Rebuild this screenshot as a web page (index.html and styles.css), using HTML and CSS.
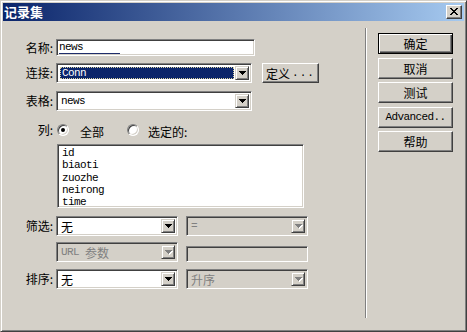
FILE: index.html
```html
<!DOCTYPE html>
<html lang="zh">
<head>
<meta charset="utf-8">
<title>记录集</title>
<link rel="stylesheet" href="styles.css">
</head>
<body>
<div class="window">
  <div class="titlebar">
    <span class="title">记录集</span>
    <span class="close-btn">
      <svg width="8" height="7" viewBox="0 0 8 7"><path d="M0 0h2v1H0zM6 0h2v1H6zM1 1h2v1H1zM5 1h2v1H5zM2 2h4v1H2zM3 3h2v1H3zM2 4h4v1H2zM1 5h2v1H1zM5 5h2v1H5zM0 6h2v1H0zM6 6h2v1H6z"/></svg>
    </span>
  </div>

  <div class="client">
    <div class="form">
      <div class="row row-name">
        <span class="lbl">名称:</span>
        <div class="field name-field"><span class="mono typed">news</span></div>
      </div>

      <div class="row row-conn">
        <span class="lbl">连接:</span>
        <div class="combo conn">
          <span class="value"><span class="sel mono">Conn</span></span>
          <span class="drop"><svg width="7" height="4" viewBox="0 0 7 4"><path d="M0 0h7v1H0zM1 1h5v1H1zM2 2h3v1H2zM3 3h1v1H3z"/></svg></span>
        </div>
        <button class="btn define">定义<span class="mono">...</span></button>
      </div>

      <div class="row row-table">
        <span class="lbl">表格:</span>
        <div class="combo wide">
          <span class="value mono">news</span>
          <span class="drop"><svg width="7" height="4" viewBox="0 0 7 4"><path d="M0 0h7v1H0zM1 1h5v1H1zM2 2h3v1H2zM3 3h1v1H3z"/></svg></span>
        </div>
      </div>

      <div class="row row-cols">
        <span class="lbl">列:</span>
        <span class="radio checked"></span>
        <span class="opt opt-all">全部</span>
        <span class="radio second"></span>
        <span class="opt opt-sel">选定的:</span>
      </div>

      <div class="listbox mono">
        <div class="item">id</div>
        <div class="item">biaoti</div>
        <div class="item">zuozhe</div>
        <div class="item">neirong</div>
        <div class="item">time</div>
      </div>

      <div class="row row-filter">
        <span class="lbl">筛选:</span>
        <div class="combo half">
          <span class="value">无</span>
          <span class="drop"><svg width="7" height="4" viewBox="0 0 7 4"><path d="M0 0h7v1H0zM1 1h5v1H1zM2 2h3v1H2zM3 3h1v1H3z"/></svg></span>
        </div>
        <div class="combo half disabled">
          <span class="value mono">=</span>
          <span class="drop"><svg width="8" height="5" viewBox="0 0 8 5"><path class="hl" d="M1 1h7v1H1zM2 2h5v1H2zM3 3h3v1H3zM4 4h1v1H4z"/><path d="M0 0h7v1H0zM1 1h5v1H1zM2 2h3v1H2zM3 3h1v1H3z"/></svg></span>
        </div>
      </div>

      <div class="row row-url">
        <span class="lbl"></span>
        <div class="combo half disabled">
          <span class="value"><span class="mono url">URL</span>参数</span>
          <span class="drop"><svg width="8" height="5" viewBox="0 0 8 5"><path class="hl" d="M1 1h7v1H1zM2 2h5v1H2zM3 3h3v1H3zM4 4h1v1H4z"/><path d="M0 0h7v1H0zM1 1h5v1H1zM2 2h3v1H2zM3 3h1v1H3z"/></svg></span>
        </div>
        <div class="field half disabled url-field"></div>
      </div>

      <div class="row row-sort">
        <span class="lbl">排序:</span>
        <div class="combo half">
          <span class="value">无</span>
          <span class="drop"><svg width="7" height="4" viewBox="0 0 7 4"><path d="M0 0h7v1H0zM1 1h5v1H1zM2 2h3v1H2zM3 3h1v1H3z"/></svg></span>
        </div>
        <div class="combo half disabled">
          <span class="value">升序</span>
          <span class="drop"><svg width="8" height="5" viewBox="0 0 8 5"><path class="hl" d="M1 1h7v1H1zM2 2h5v1H2zM3 3h3v1H3zM4 4h1v1H4z"/><path d="M0 0h7v1H0zM1 1h5v1H1zM2 2h3v1H2zM3 3h1v1H3z"/></svg></span>
        </div>
      </div>
    </div>

    <div class="sep"></div>

    <div class="actions">
      <button class="btn default">确定</button>
      <button class="btn">取消</button>
      <button class="btn">测试</button>
      <button class="btn mono">Advanced..</button>
      <button class="btn">帮助</button>
    </div>
  </div>
</div>
</body>
</html>
```

FILE: styles.css
```css
* {
  box-sizing: border-box;
}
html, body {
  margin: 0;
  padding: 0;
}
body {
  width: 467px;
  height: 332px;
  overflow: hidden;
  background: #d4d0c8;
  font: 12px "Noto Sans CJK SC", sans-serif;
  color: #000;
}
.mono {
  font-family: "Liberation Mono", "Noto Sans CJK SC", monospace;
  font-size: 11px;
  letter-spacing: -0.6px;
}

/* window frame */
.window {
  width: 467px;
  height: 332px;
  display: flex;
  flex-direction: column;
  background: #d4d0c8;
  border: 1px solid;
  border-color: #d4d0c8 #404040 #404040 #d4d0c8;
  box-shadow: inset 1px 1px #fff, inset -1px -1px #808080;
  padding: 2px;
}
.titlebar {
  height: 18px;
  flex: none;
  display: flex;
  align-items: center;
  justify-content: space-between;
  padding: 0 2px 0 1px;
  background: linear-gradient(to right, #0a246a, #a6caf0);
}
.title {
  color: #fff;
  font-weight: 700;
  font-size: 13px;
  line-height: 18px;
}
.close-btn {
  width: 16px;
  height: 14px;
  display: block;
  padding: 2px 0 0 3px;
  background: #d4d0c8;
  border: 1px solid;
  border-color: #fff #404040 #404040 #fff;
  box-shadow: inset -1px -1px #808080;
}
.close-btn svg {
  display: block;
}

.client {
  flex: 1;
  display: flex;
}

/* left form */
.form {
  width: 362px;
  flex: none;
  padding-top: 18px;
}
.row {
  display: flex;
  align-items: center;
}
.lbl {
  width: 54px;
  flex: none;
  text-align: right;
  padding-right: 4px;
  line-height: 14px;
}
.row-name { height: 17px; }
.row-conn { height: 20px; margin-top: 7px; }
.row-table { height: 20px; margin-top: 8px; }
.row-cols { height: 14px; margin-top: 12px; align-items: flex-start; }
.row-filter { height: 20px; margin-top: 8px; }
.row-url { height: 20px; margin-top: 6px; }
.row-sort { height: 20px; margin-top: 7px; }

/* sunken controls */
.field,
.combo,
.listbox {
  background: #fff;
  border: 1px solid;
  border-color: #808080 #fff #fff #808080;
  box-shadow: inset 1px 1px #404040, inset -1px -1px #d4d0c8;
}
.field {
  height: 17px;
  display: flex;
  align-items: center;
  padding: 0 2px;
  overflow: hidden;
}
.name-field {
  width: 199px;
  margin-left: -1px;
}
.typed {
  display: block;
  width: 61px;
  line-height: 12px;
  border-bottom: 1px solid #1f2d6b;
}
.combo {
  height: 20px;
  display: flex;
  padding: 2px;
  margin-left: -1px;
}
.combo.conn,
.combo.wide {
  width: 196px;
}
.combo.half {
  width: 122px;
}
.combo.half + .combo.half,
.combo.half + .field {
  margin-left: 8px;
}
.value {
  flex: 1;
  display: flex;
  align-items: center;
  padding-left: 2px;
  white-space: nowrap;
  overflow: hidden;
}
.url {
  margin-right: 6px;
}
.conn .value {
  padding: 1px;
}
.sel {
  flex: 1;
  align-self: stretch;
  display: flex;
  align-items: center;
  padding-left: 1px;
  background: #0a246a;
  color: #fff;
  border: 1px dotted #d8d0a0;
}
.drop {
  width: 14px;
  flex: none;
  display: flex;
  align-items: center;
  justify-content: center;
  background: #d4d0c8;
  border: 1px solid;
  border-color: #d4d0c8 #404040 #404040 #d4d0c8;
  box-shadow: inset 1px 1px #fff, inset -1px -1px #808080;
}
.drop svg {
  display: block;
}
.disabled {
  background: #d4d0c8;
  color: #808080;
}
.disabled .drop path {
  fill: #808080;
}
.disabled .drop path.hl {
  fill: #fff;
}
.disabled .drop svg {
  margin: 1px 0 0 1px;
}
.url-field {
  width: 122px;
  height: 16px;
  align-self: flex-end;
}

/* radio buttons */
.radio {
  width: 12px;
  height: 12px;
  flex: none;
  margin-top: 1px;
  border-radius: 50%;
  background: #fff;
  border: 1px solid;
  border-color: #808080 #fff #fff #808080;
  box-shadow: inset 1px 1px #404040, inset -1px -1px #d4d0c8;
  display: flex;
  align-items: center;
  justify-content: center;
}
.radio.checked {
  margin-left: 0;
}
.radio.checked::after {
  content: "";
  width: 4px;
  height: 4px;
  border-radius: 50%;
  background: #000;
}
.opt {
  line-height: 14px;
  margin-top: 2px;
}
.opt-all {
  margin-left: 11px;
}
.radio.second {
  margin-left: 23px;
}
.opt-sel {
  margin-left: 9px;
}

/* column list */
.listbox {
  width: 247px;
  height: 64px;
  margin: 7px 0 0 54px;
  padding: 2px 4px;
  overflow: hidden;
}
.item {
  line-height: 12.25px;
  height: 12.25px;
}

/* separator */
.sep {
  width: 2px;
  height: 290px;
  margin-top: 7px;
  flex: none;
  border-left: 1px solid #808080;
  border-right: 1px solid #fff;
}

/* buttons */
.actions {
  margin-left: 11px;
  padding-top: 12px;
  display: flex;
  flex-direction: column;
  gap: 3.5px;
}
.btn {
  width: 75px;
  height: 21px;
  padding: 0;
  margin: 0;
  display: flex;
  align-items: center;
  justify-content: center;
  font: 12px "Noto Sans CJK SC", sans-serif;
  color: #000;
  background: #d4d0c8;
  border: 1px solid;
  border-color: #fff #404040 #404040 #fff;
  box-shadow: inset -1px -1px #808080;
  border-radius: 0;
}
.btn.mono {
  font-family: "Liberation Mono", monospace;
  font-size: 11px;
}
.btn.default {
  border-color: #000;
  box-shadow: inset 1px 1px #fff, inset -1px -1px #404040, inset -2px -2px #808080;
}
.btn.define {
  width: 57px;
  height: 20px;
  margin-left: 10px;
}
.btn.define .mono {
  letter-spacing: 1px;
  margin-left: 2px;
}
```
